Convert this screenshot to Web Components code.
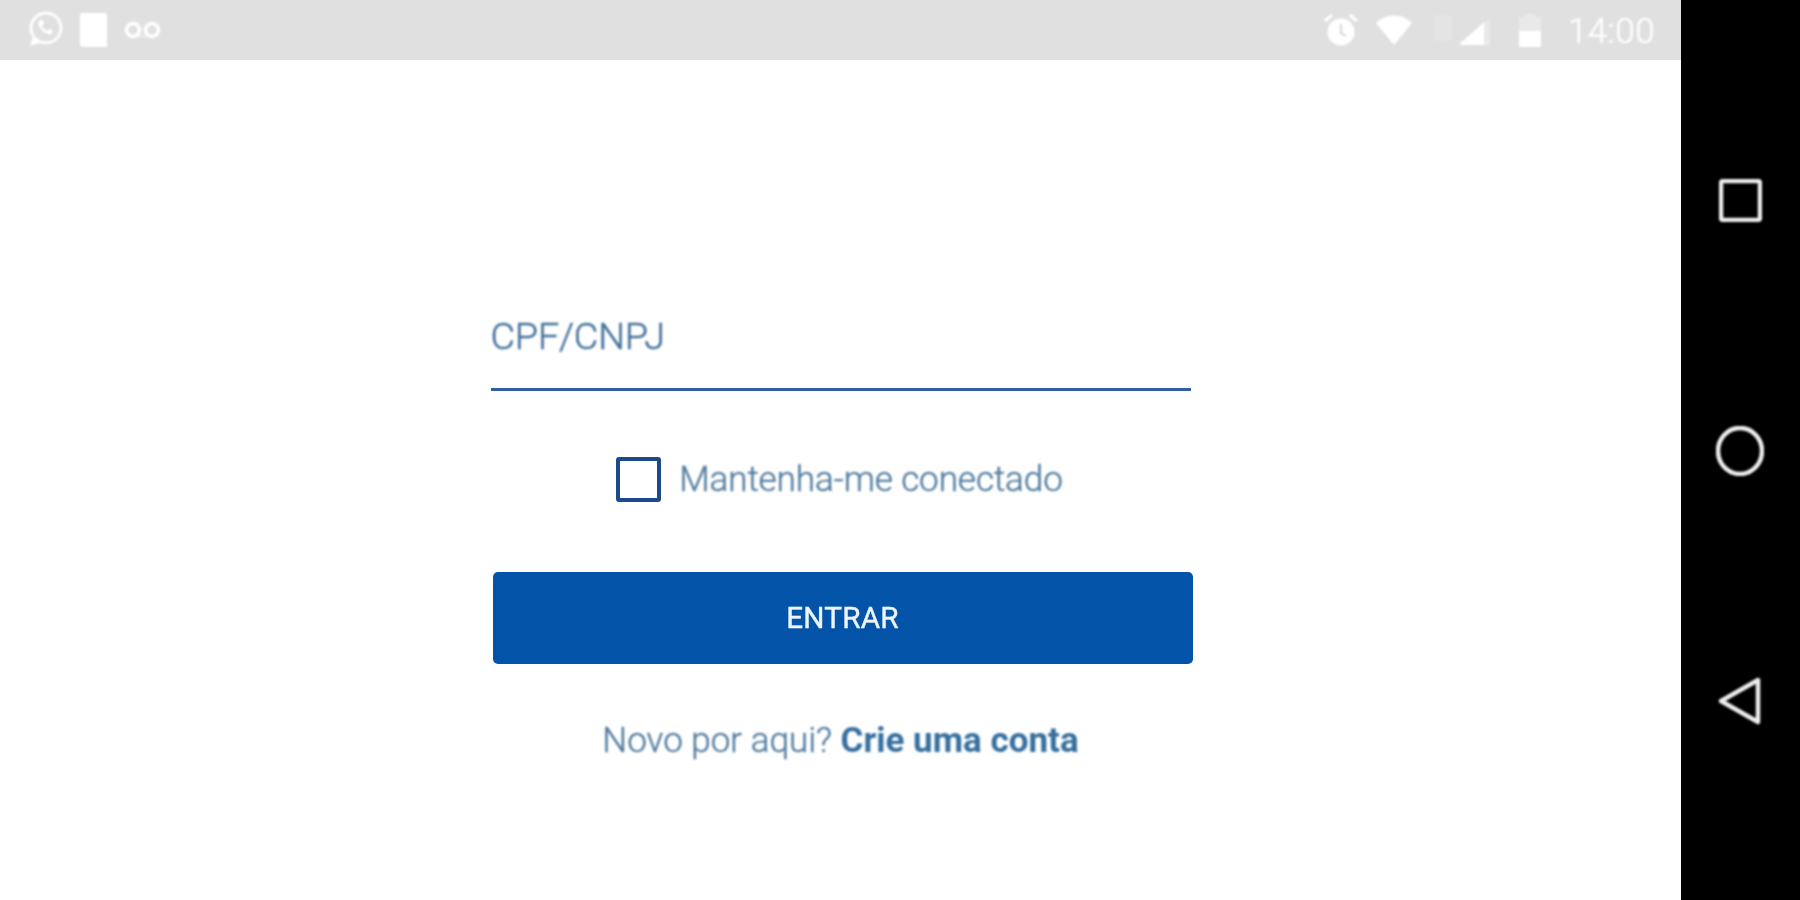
<!DOCTYPE html>
<html lang="pt"><head><meta charset="utf-8"><title>Login</title>
<style>html,body{margin:0;height:100%;background:#fff;overflow:hidden}body{font-family:Roboto,"Liberation Sans",sans-serif}</style>
</head><body>
<phone-frame>
  <status-bar slot="status"></status-bar>
  <login-form></login-form>
  <nav-bar slot="nav"></nav-bar>
</phone-frame>
<script>
function def(name, html){
  customElements.define(name, class extends HTMLElement{
    constructor(){super();this.attachShadow({mode:'open'}).innerHTML=html;}
  });
}
def('phone-frame',`<style>
:host{display:flex;width:1800px;height:900px}
.screen{flex:0 0 1681px;display:flex;flex-direction:column;min-width:0}
.body{flex:1;display:flex;justify-content:center}
.nav{flex:1;display:flex}
</style>
<div class="screen"><slot name="status"></slot><div class="body"><slot></slot></div></div>
<div class="nav"><slot name="nav"></slot></div>`);

def('status-bar',`<style>
:host{display:flex;align-items:center;justify-content:space-between;height:60px;background:#e0e0e0;color:#fff;box-sizing:border-box;padding:0 26px 0 26px;font-family:Roboto,sans-serif}
.g{display:flex;align-items:center;filter:blur(1.3px)}
svg{display:block}
.time{font-size:35px;font-weight:300;letter-spacing:.4px;margin-left:25px;line-height:60px;-webkit-text-stroke:.4px #fff;position:relative;top:2px}
</style>
<div class="g" style="gap:15px">
<svg width="38" height="40" viewBox="0 0 38 40"><circle cx="20" cy="18" r="15" fill="none" stroke="#fff" stroke-width="2.8"/><path d="M4 36l3-9 6 6z" fill="#fff"/><path d="M14 10c-2 2-2 5 1 9s7 6 10 5c2-1 2-3 1-4l-3-1-2 2c-2-1-4-3-5-5l2-2-1-4z" fill="#fff"/></svg>
<svg width="30" height="36" viewBox="0 0 30 36"><path d="M2 1h24a2 2 0 0 1 2 2v32H4a3 3 0 0 1-3-3V2z" fill="#fff"/></svg>
<svg width="38" height="20" viewBox="0 0 38 20"><circle cx="9" cy="10" r="6.5" fill="none" stroke="#fff" stroke-width="3.6"/><circle cx="28" cy="10" r="6.5" fill="none" stroke="#fff" stroke-width="3.6"/><path d="M9 16h19" stroke="#fff" stroke-width="2" opacity=".5"/></svg>
</div>
<div class="g">
<svg width="36" height="36" viewBox="0 0 36 36" style="margin-right:16px"><circle cx="18" cy="20" r="13.5" fill="#fff"/><path d="M2 9l7-6M34 9l-7-6" stroke="#fff" stroke-width="3"/><path d="M18 12v9l5 3" stroke="#d4d4d4" stroke-width="2" fill="none"/></svg>
<svg width="38" height="32" viewBox="0 0 38 32" style="margin-right:19px"><path d="M1 9C11-1 27-1 37 9L19 31z" fill="#fff"/></svg>
<svg width="60" height="36" viewBox="0 0 60 36"><rect x="2" y="3" width="18" height="26" fill="#fff" opacity=".14"/><path d="M58 6v27H25z" fill="#fff" opacity=".3"/><path d="M52 10v23H27z" fill="#fff"/></svg>
<svg width="26" height="34" viewBox="0 0 26 34" style="margin-left:25px"><path d="M8 1h10v3h6v30H2V4h6z" fill="#fff" opacity=".3"/><rect x="2" y="18" width="22" height="16" fill="#fff"/></svg>
<span class="time">14:00</span>
</div>`);

def('login-form',`<style>
:host{display:flex;flex-direction:column;width:700px;box-sizing:border-box;padding-top:248px;font-family:Roboto,sans-serif}
.t{filter:blur(.8px)}
.field{height:83px;box-sizing:border-box;border-bottom:3px solid #2f5f9e;font-size:37.8px;font-weight:300;-webkit-text-stroke:.5px #44719b;color:#44719b;line-height:56px;letter-spacing:-.2px}
.field span{display:block;filter:blur(.8px)}
.check{display:flex;align-items:center;justify-content:center;height:46px;margin-top:65px;gap:18px;padding-right:2px}
.box{width:45px;height:45px;box-sizing:border-box;border:4px solid #1a4a8a;border-radius:3px;filter:blur(.7px);background:#fff}
.label{font-size:35.1px;font-weight:300;color:#4f7a9e;-webkit-text-stroke:.4px #4f7a9e;line-height:46px;letter-spacing:-.1px}
.btn{display:flex;align-items:center;justify-content:center;height:92px;box-sizing:border-box;padding-bottom:2px;margin:70px -2px 0 2px;background:#0353a8;border-radius:5px;color:#eef5fa;font-size:29.7px;font-weight:400;-webkit-text-stroke:.4px #eef5fa;letter-spacing:.2px;filter:blur(.7px)}
.signup{text-align:center;margin:54px 0 0;font-size:35px;font-weight:300;color:#4f7a9e;-webkit-text-stroke:.4px #4f7a9e;line-height:46px}
b{font-weight:700;color:#356f9f;-webkit-text-stroke:0}
</style>
<div class="field"><span>CPF/CNPJ</span></div>
<div class="check"><div class="box"></div><span class="label t">Mantenha-me conectado</span></div>
<div class="btn">ENTRAR</div>
<div class="signup t">Novo por aqui? <b>Crie uma conta</b></div>`);

def('nav-bar',`<style>
:host{display:flex;flex-direction:column;align-items:center;flex:1;height:900px;background:#000;box-sizing:border-box;padding:179px 1px 0 0}
svg{display:block;filter:blur(.8px)}
</style>
<svg width="43" height="43" viewBox="0 0 43 43"><rect x="2" y="2" width="39" height="39" rx="2" fill="none" stroke="#eee" stroke-width="4.5"/></svg>
<svg width="48" height="50" viewBox="0 0 48 50" style="margin-top:204px"><ellipse cx="24" cy="25" rx="22" ry="23" fill="none" stroke="#eee" stroke-width="4.5"/></svg>
<svg width="44" height="48" viewBox="0 0 44 48" style="margin-top:201px"><path d="M3 24L40 3v42z" fill="none" stroke="#eee" stroke-width="4.5" stroke-linejoin="round"/></svg>`);
</script>
</body></html>
